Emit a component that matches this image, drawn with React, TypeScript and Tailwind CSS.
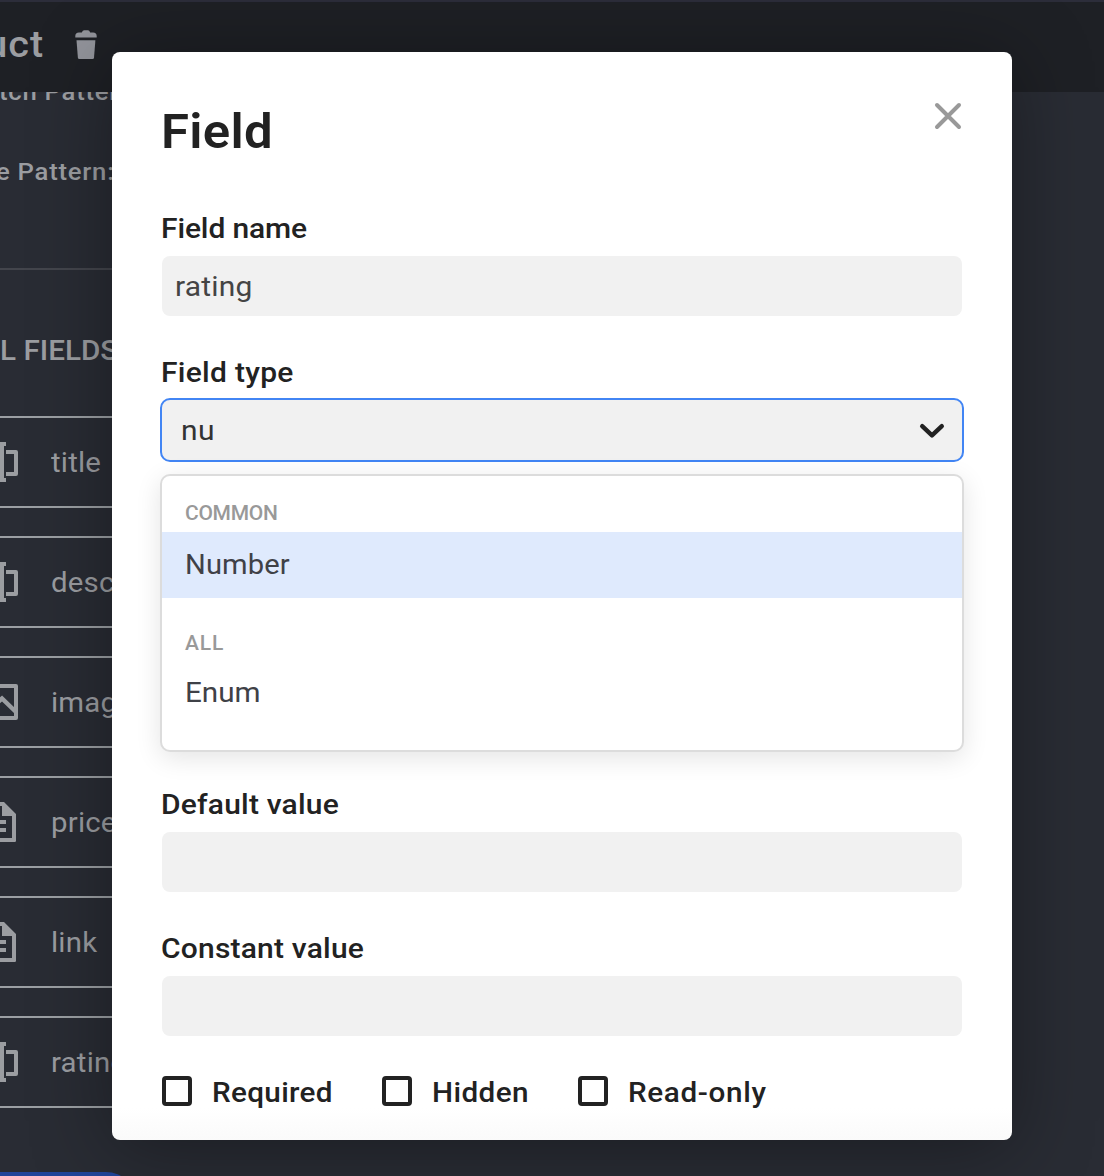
import type { ReactNode } from 'react';

function TextIcon() {
  return (
    <svg width="40" height="40" viewBox="-20 0 40 40" className="block" fill="none">
      <path d="M-6 2H6M-6 38H6" stroke="currentColor" strokeWidth="4" />
      <path d="M1 1V39" stroke="currentColor" strokeWidth="6" />
      <path d="M6 10H16V32H6" stroke="currentColor" strokeWidth="4" strokeLinejoin="round" />
    </svg>
  );
}

function ImageIcon() {
  return (
    <svg width="40" height="40" viewBox="-20 0 40 40" className="block" fill="none">
      <rect x="-16" y="4" width="32" height="32" stroke="currentColor" strokeWidth="4" strokeLinejoin="round" />
      <path d="M-10 27L2 16.5L16 30" stroke="currentColor" strokeWidth="4.4" />
    </svg>
  );
}

function DocumentIcon() {
  return (
    <svg width="40" height="40" viewBox="-20 0 40 40" className="block" fill="currentColor">
      <path fillRule="evenodd" d="M-14 0H4L16 12V38.8Q16 40 14.8 40H-16V0ZM-12 4V36H12V14H2V4Z" />
      <path d="M-8 18H6V22H-8ZM-8 26H6V30H-8Z" />
    </svg>
  );
}

function TrashIcon() {
  return (
    <svg width="22" height="30" viewBox="0 0 22 30" className="block" fill="currentColor">
      <path d="M0.3 7.6V6Q0.3 2.4 4 2.4H6.8Q7.6 0.2 9.2 0.2H13Q14.4 0.2 15.2 2.4H18Q21.7 2.4 21.7 6V7.6Z" />
      <path d="M1.5 10.2H20.4L19 27.8Q18.9 29 17.6 29H4.3Q3 29 2.9 27.8Z" />
    </svg>
  );
}

const rows: { name: string; icon: ReactNode }[] = [
  { name: 'title', icon: <TextIcon /> },
  { name: 'description', icon: <TextIcon /> },
  { name: 'image', icon: <ImageIcon /> },
  { name: 'price', icon: <DocumentIcon /> },
  { name: 'link', icon: <DocumentIcon /> },
  { name: 'rating', icon: <TextIcon /> },
];

function SchemaPage() {
  return (
    <div className="flex h-full flex-col bg-[#292c34] text-[#9b9da1]">
      <header className="z-10 flex h-[92px] shrink-0 items-center border-t-2 border-[#2c2d3a] bg-[#1e2025]">
        <div className="flex w-[43px] shrink-0 justify-end pb-[5px] text-[37px] leading-[40px] font-medium tracking-[1px]">
          <span className="-mr-px inline-block origin-right scale-x-[1.07]">Product</span>
        </div>
        <div className="ml-8 pb-1 text-[#92949b]">
          <TrashIcon />
        </div>
      </header>
      <div className="-mt-3 w-[114px] shrink-0 text-2xl leading-6 font-medium tracking-[0.7px]">
        <div className="flex h-6 justify-end whitespace-nowrap">
          <span className="-mr-[28px] inline-block origin-right scale-x-[1.07]">Match Pattern:</span>
        </div>
        <div className="mt-14 flex h-6 justify-end whitespace-nowrap">
          <span className="-mr-px inline-block origin-right scale-x-[1.07]">Date Pattern:</span>
        </div>
      </div>
      <div className="mt-[84px] mr-[200px] h-0.5 shrink-0 bg-[#43454c]" />
      <div className="mt-[67px] flex h-7 w-[118px] shrink-0 justify-end text-[28px] leading-7 font-medium whitespace-nowrap">
        <span className="inline-block origin-right scale-x-[1.06]">ALL FIELDS</span>
      </div>
      <ul className="mt-[51px] mr-[200px] flex flex-col gap-7">
        {rows.map((row) => (
          <li key={row.name} className="flex h-[92px] shrink-0 items-center border-y-2 border-[#9b9fa3]">
            <div className="-ml-5 w-[71px] shrink-0">{row.icon}</div>
            <span className="mt-0.5 inline-block origin-left scale-x-[1.05] text-[28px] leading-7 tracking-[0.2px]">
              {row.name}
            </span>
          </li>
        ))}
      </ul>
      <div className="mt-16 -ml-8 h-[60px] w-[168px] shrink-0 rounded-[30px] bg-[#21459a]" />
    </div>
  );
}

function Label({ children, className }: { children: ReactNode; className: string }) {
  return (
    <label className={`-ml-px block text-[28px] leading-7 font-medium ${className}`}>
      <span className="inline-block origin-left scale-x-[1.07]">{children}</span>
    </label>
  );
}

function Checkbox({ children, className }: { children: ReactNode; className: string }) {
  return (
    <div className={`flex h-[30px] shrink-0 items-center ${className}`}>
      <span className="size-[30px] shrink-0 rounded-[4px] border-4 border-[#222]" />
      <span className="mt-1 ml-5 inline-block origin-left scale-x-[1.06] text-[28px] leading-7 font-medium whitespace-nowrap">
        {children}
      </span>
    </div>
  );
}

function TypeMenu() {
  return (
    <div className="absolute inset-x-0 top-[76px] z-10 h-[278px] rounded-[10px] border-2 border-[#dcdcdc] bg-white pt-[25px] text-[28px] shadow-[0_6px_26px_rgba(0,0,0,0.11)]">
      <div className="pl-[23px] text-[21px] leading-6 font-medium tracking-[-0.28px] text-[#999]">COMMON</div>
      <div className="mt-[7px] flex h-[66px] items-center bg-[#dfeafd] pl-[22.5px] leading-7 tracking-[0.1px] text-[#3f4147]">
        <span className="inline-block origin-left scale-x-[1.04]">Number</span>
      </div>
      <div className="mt-[33px] pl-[23px] text-[21px] leading-6 font-medium tracking-[0.87px] text-[#999]">ALL</div>
      <div className="mt-6 pl-[22.5px] leading-7 text-[#3f4147]">
        <span className="inline-block origin-left scale-x-[1.06]">Enum</span>
      </div>
    </div>
  );
}

function FieldDialog() {
  return (
    <section className="absolute top-[52px] left-[112px] z-20 h-[1088px] w-[900px] rounded-lg bg-[linear-gradient(to_bottom,#fff_1056px,#fafafa_1088px)] px-[50px] pt-14 text-[#222] shadow-[0_8px_80px_rgba(0,0,0,0.36)]">
      <div className="flex justify-between">
        <h1 className="-ml-px origin-left scale-x-[1.06] text-5xl leading-[48px] font-semibold tracking-[0.3px]">Field</h1>
        <svg width="28" height="28" viewBox="0 0 28 28" className="-mt-1.5" fill="none">
          <path d="M3 3L25 25M25 3L3 25" stroke="#999" strokeWidth="4" strokeLinecap="round" />
        </svg>
      </div>
      <Label className="mt-[59px] tracking-[-0.1px]">Field name</Label>
      <div className="mt-[13px] flex h-[60px] items-center rounded-lg bg-[#f1f1f1] pt-0.5 pl-[13px] text-[28px] leading-7 tracking-[0.2px] text-[#444]">
        <span className="inline-block origin-left scale-x-[1.07]">rating</span>
      </div>
      <Label className="mt-[43px] tracking-[0.28px]">Field type</Label>
      <div className="relative -mx-0.5 mt-[11px]">
        <div className="flex h-16 items-center justify-between rounded-[10px] border-2 border-[#4285f4] bg-[#f1f1f1] pr-[17px] pl-[19px] text-[28px] leading-7 tracking-[0.5px] text-[#333]">
          <span className="mt-0.5 inline-block origin-left scale-x-[1.07]">nu</span>
          <svg width="26" height="16" viewBox="0 0 26 16" className="mt-0.5" fill="none">
            <path d="M3.2 3.2L13 12.4L22.8 3.2" stroke="#222" strokeWidth="4.4" strokeLinecap="round" strokeLinejoin="round" />
          </svg>
        </div>
        <TypeMenu />
      </div>
      <Label className="mt-[329px] tracking-[0.2px]">Default value</Label>
      <div className="mt-[13px] h-[60px] rounded-lg bg-[#f1f1f1]" />
      <Label className="mt-[43px] tracking-[0.2px]">Constant value</Label>
      <div className="mt-[13px] h-[60px] rounded-lg bg-[#f1f1f1]" />
      <div className="mt-10 flex">
        <Checkbox className="w-[220px] tracking-[0.3px]">Required</Checkbox>
        <Checkbox className="w-[196px] tracking-[0.4px]">Hidden</Checkbox>
        <Checkbox className="tracking-[0.6px]">Read-only</Checkbox>
      </div>
    </section>
  );
}

export default function App() {
  return (
    <main className="relative h-[1176px] w-[1104px] overflow-hidden font-['Roboto',sans-serif]">
      <SchemaPage />
      <FieldDialog />
    </main>
  );
}
